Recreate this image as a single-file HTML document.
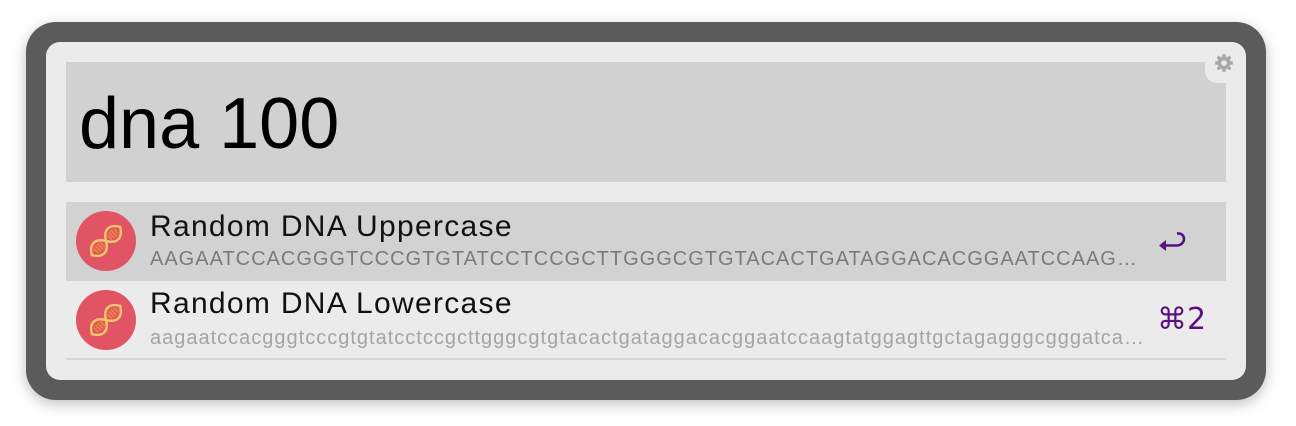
<!DOCTYPE html>
<html><head><meta charset="utf-8"><style>
html,body{margin:0;padding:0;width:1296px;height:426px;background:#fff;overflow:hidden;font-family:"Liberation Sans",Arial,sans-serif}
.outer{position:absolute;left:26px;top:22px;width:1240px;height:378px;background:#5b5b5b;border-radius:30px;box-shadow:0 4px 14px rgba(0,0,0,.25)}
.inner{position:absolute;left:46px;top:42px;width:1200px;height:338px;background:#ebebeb;border-radius:14px}
.search{position:absolute;left:66px;top:62px;width:1160px;height:120px;background:#d1d1d1}
.q{position:absolute;left:79px;top:84px;font-size:72px;line-height:80px;color:#000}
.cut{position:absolute;left:1205px;top:62px;width:21px;height:21px;background:#ebebeb;border-bottom-left-radius:12px}
.row{position:absolute;left:66px;width:1160px}
.r1{top:202px;height:79px;background:#d2d2d2}
.r2{top:282px;height:76px;border-bottom:2px solid #d6d6d6}
.ic{position:absolute;left:10px;width:60px;height:60px;border-radius:50%;background:#e05464}
.t{position:absolute;left:84px;font-size:30px;letter-spacing:1.3px;color:#111;white-space:nowrap}
.s{position:absolute;left:84px;width:997px;font-size:20px;white-space:nowrap;overflow:hidden;text-overflow:ellipsis}
.k{position:absolute;color:#5a1080}
</style></head><body>
<div class="outer"></div>
<div class="inner"></div>
<div class="search"></div>
<div class="q">dna 100</div>
<div class="cut"></div>
<svg style="position:absolute;left:1214px;top:53px" width="20" height="20" viewBox="0 0 20 20"><g fill="#a9a9a9"><circle cx="10" cy="10" r="6.5"/><g><rect x="8.3" y="1" width="3.4" height="18" rx="1"/><rect x="8.3" y="1" width="3.4" height="18" rx="1" transform="rotate(45 10 10)"/><rect x="8.3" y="1" width="3.4" height="18" rx="1" transform="rotate(90 10 10)"/><rect x="8.3" y="1" width="3.4" height="18" rx="1" transform="rotate(135 10 10)"/></g></g><circle cx="10" cy="10" r="2.8" fill="#ebebeb"/></svg>

<div class="row r1">
 <div class="ic" style="top:9px"><svg width="60" height="60" viewBox="0 0 60 60"><g transform="rotate(-45 30 30)"><g stroke="#f08a3a" stroke-width="1.6"><path d="M16 27v6M19 26v8M22 26v8M25 27v6M35 27v6M38 26v8M41 26v8M44 27v6"/></g><g fill="none" stroke="#f7c56a" stroke-width="2.4" stroke-linecap="round"><path d="M10 30 C16 20 24 20 30 30 C36 40 44 40 50 30"/><path d="M10 30 C16 40 24 40 30 30 C36 20 44 20 50 30"/></g></g></svg></div>
 <div class="t" style="top:8px">Random DNA Uppercase</div>
 <div class="s" style="top:46px;color:#7b7b7b;letter-spacing:1px">AAGAATCCACGGGTCCCGTGTATCCTCCGCTTGGGCGTGTACACTGATAGGACACGGAATCCAAGTATGGAGTTGCTAGAGGGCGGGA</div>
 <svg style="position:absolute;left:1092px;top:29px" width="28" height="24" viewBox="0 0 28 24"><path d="M19 2.5 C24 2 26 5 26 8 C26 12 22 14.5 19 14.5 L5 14.5" fill="none" stroke="#5a1080" stroke-width="2.6"/><path d="M1 14.5 L8 9 L8 20 Z" fill="#5a1080"/></svg>
</div>
<div class="row r2">
 <div class="ic" style="top:8px"><svg width="60" height="60" viewBox="0 0 60 60"><g transform="rotate(-45 30 30)"><g stroke="#f08a3a" stroke-width="1.6"><path d="M16 27v6M19 26v8M22 26v8M25 27v6M35 27v6M38 26v8M41 26v8M44 27v6"/></g><g fill="none" stroke="#f7c56a" stroke-width="2.4" stroke-linecap="round"><path d="M10 30 C16 20 24 20 30 30 C36 40 44 40 50 30"/><path d="M10 30 C16 40 24 40 30 30 C36 20 44 20 50 30"/></g></g></svg></div>
 <div class="t" style="top:5px">Random DNA Lowercase</div>
 <div class="s" style="top:45px;color:#a4a4a4;letter-spacing:1px">aagaatccacgggtcccgtgtatcctccgcttgggcgtgtacactgataggacacggaatccaagtatggagttgctagagggcgggatcaggtacgtacgatcgatcg</div>
 <div class="k" style="left:1091px;top:20px;font-size:30px;font-family:'DejaVu Sans','Liberation Sans',sans-serif">⌘2</div>
</div>
</body></html>
